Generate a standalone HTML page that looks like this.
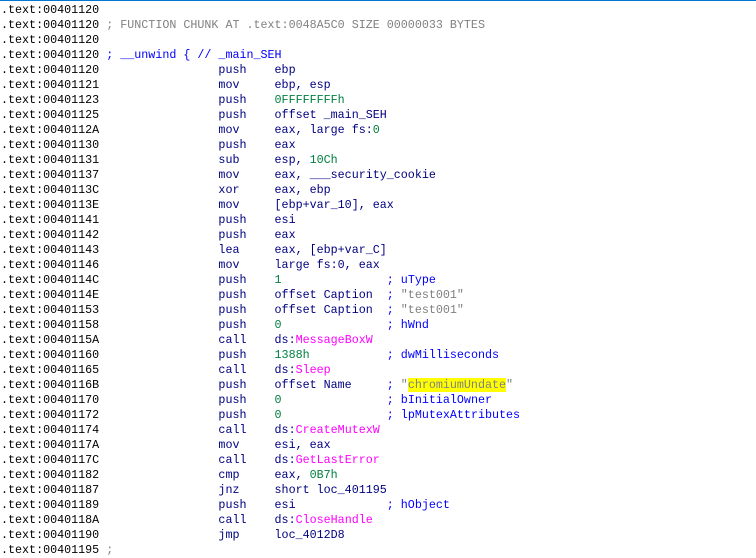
<!DOCTYPE html><html><head><style>
body{margin:0;width:756px;height:549px;overflow:hidden;background:#fff;border-top:1px solid #0078d7;box-sizing:border-box}
pre{margin:0;position:absolute;top:3px;left:1px;font-family:"Liberation Mono",monospace;font-size:11.7px;line-height:15px;color:#000080}
.a{color:#000}.g{color:#808080}.b{color:#0000ff}.n{color:#008040}.m{color:#ff00ff}.y{background:#ffff00}
</style></head><body><pre><span class="a">.text:00401120</span>
<span class="a">.text:00401120</span> <span class="g">; FUNCTION CHUNK AT .text:0048A5C0 SIZE 00000033 BYTES</span>
<span class="a">.text:00401120</span>
<span class="a">.text:00401120</span> <span class="b">; __unwind { // _main_SEH</span>
<span class="a">.text:00401120</span>                 push    ebp
<span class="a">.text:00401121</span>                 mov     ebp, esp
<span class="a">.text:00401123</span>                 push    <span class="n">0FFFFFFFFh</span>
<span class="a">.text:00401125</span>                 push    offset _main_SEH
<span class="a">.text:0040112A</span>                 mov     eax, large fs:<span class="n">0</span>
<span class="a">.text:00401130</span>                 push    eax
<span class="a">.text:00401131</span>                 sub     esp, <span class="n">10Ch</span>
<span class="a">.text:00401137</span>                 mov     eax, ___security_cookie
<span class="a">.text:0040113C</span>                 xor     eax, ebp
<span class="a">.text:0040113E</span>                 mov     [ebp+var_10], eax
<span class="a">.text:00401141</span>                 push    esi
<span class="a">.text:00401142</span>                 push    eax
<span class="a">.text:00401143</span>                 lea     eax, [ebp+var_C]
<span class="a">.text:00401146</span>                 mov     large fs:0, eax
<span class="a">.text:0040114C</span>                 push    <span class="n">1</span>               <span class="b">; uType</span>
<span class="a">.text:0040114E</span>                 push    offset Caption  <span class="b">; </span><span class="g">"test001"</span>
<span class="a">.text:00401153</span>                 push    offset Caption  <span class="b">; </span><span class="g">"test001"</span>
<span class="a">.text:00401158</span>                 push    <span class="n">0</span>               <span class="b">; hWnd</span>
<span class="a">.text:0040115A</span>                 call    ds:<span class="m">MessageBoxW</span>
<span class="a">.text:00401160</span>                 push    <span class="n">1388h</span>           <span class="b">; dwMilliseconds</span>
<span class="a">.text:00401165</span>                 call    ds:<span class="m">Sleep</span>
<span class="a">.text:0040116B</span>                 push    offset Name     <span class="b">; </span><span class="g">"<span class="y">chromiumUndate</span>"</span>
<span class="a">.text:00401170</span>                 push    <span class="n">0</span>               <span class="b">; bInitialOwner</span>
<span class="a">.text:00401172</span>                 push    <span class="n">0</span>               <span class="b">; lpMutexAttributes</span>
<span class="a">.text:00401174</span>                 call    ds:<span class="m">CreateMutexW</span>
<span class="a">.text:0040117A</span>                 mov     esi, eax
<span class="a">.text:0040117C</span>                 call    ds:<span class="m">GetLastError</span>
<span class="a">.text:00401182</span>                 cmp     eax, <span class="n">0B7h</span>
<span class="a">.text:00401187</span>                 jnz     short loc_401195
<span class="a">.text:00401189</span>                 push    esi             <span class="b">; hObject</span>
<span class="a">.text:0040118A</span>                 call    ds:<span class="m">CloseHandle</span>
<span class="a">.text:00401190</span>                 jmp     loc_4012D8
<span class="a">.text:00401195</span> <span class="g">;</span>
</pre></body></html>
